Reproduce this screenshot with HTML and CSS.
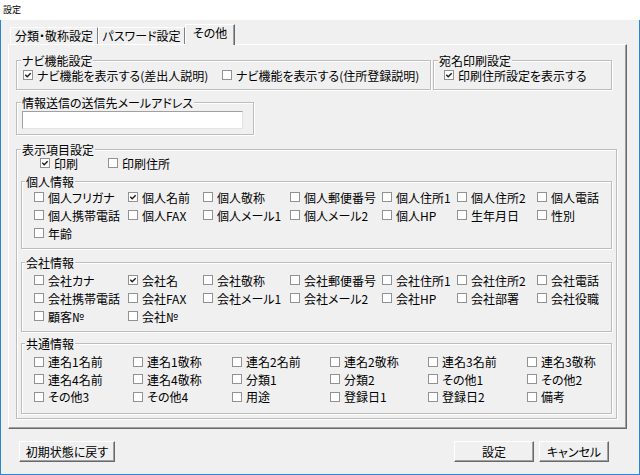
FILE: index.html
```html
<!DOCTYPE html>
<html lang="ja">
<head>
<meta charset="utf-8">
<title>設定</title>
<link rel="stylesheet" href="styles.css">
</head>
<body>
<div class="titlebar">設定</div>
<div class="frame">
  <div class="tabs">
    <div class="tab tab1">分類・敬称設定</div>
    <div class="tab tab2">パスワード設定</div>
    <div class="tab sel">その他</div>
  </div>
  <div class="panel">
    <div class="row1">
      <div class="grp navi">
        <div class="lgd">ナビ機能設定</div>
        <div class="row">
          <label class="cb w199"><span class="box"><svg viewBox="0 0 8 8" width="8" height="8"><path d="M1.3 3.8 L3.2 5.8 L6.7 2.2"/></svg></span>ナビ機能を表示する(差出人説明)</label>
          <label class="cb"><span class="box"></span>ナビ機能を表示する(住所登録説明)</label>
        </div>
      </div>
      <div class="grp atena">
        <div class="lgd">宛名印刷設定</div>
        <div class="row">
          <label class="cb"><span class="box"><svg viewBox="0 0 8 8" width="8" height="8"><path d="M1.3 3.8 L3.2 5.8 L6.7 2.2"/></svg></span>印刷住所設定を表示する</label>
        </div>
      </div>
    </div>
    <div class="grp mail">
      <div class="lgd">情報送信の送信先メールアドレス</div>
      <div class="input"></div>
    </div>
    <div class="grp disp">
      <div class="lgd">表示項目設定</div>
      <div class="toprow">
        <label class="cb w68"><span class="box"><svg viewBox="0 0 8 8" width="8" height="8"><path d="M1.3 3.8 L3.2 5.8 L6.7 2.2"/></svg></span>印刷</label>
        <label class="cb"><span class="box"></span>印刷住所</label>
      </div>
      <div class="grp sub kojin">
        <div class="lgd">個人情報</div>
        <div class="grid g7">
          <label class="cb"><span class="box"></span>個人フリガナ</label>
          <label class="cb"><span class="box"><svg viewBox="0 0 8 8" width="8" height="8"><path d="M1.3 3.8 L3.2 5.8 L6.7 2.2"/></svg></span>個人名前</label>
          <label class="cb"><span class="box"></span>個人敬称</label>
          <label class="cb"><span class="box"></span>個人郵便番号</label>
          <label class="cb"><span class="box"></span>個人住所1</label>
          <label class="cb"><span class="box"></span>個人住所2</label>
          <label class="cb"><span class="box"></span>個人電話</label>
          <label class="cb"><span class="box"></span>個人携帯電話</label>
          <label class="cb"><span class="box"></span>個人FAX</label>
          <label class="cb"><span class="box"></span>個人メール1</label>
          <label class="cb"><span class="box"></span>個人メール2</label>
          <label class="cb"><span class="box"></span>個人HP</label>
          <label class="cb"><span class="box"></span>生年月日</label>
          <label class="cb"><span class="box"></span>性別</label>
          <label class="cb"><span class="box"></span>年齢</label>
        </div>
      </div>
      <div class="grp sub kaisha">
        <div class="lgd">会社情報</div>
        <div class="grid g7">
          <label class="cb"><span class="box"></span>会社カナ</label>
          <label class="cb"><span class="box"><svg viewBox="0 0 8 8" width="8" height="8"><path d="M1.3 3.8 L3.2 5.8 L6.7 2.2"/></svg></span>会社名</label>
          <label class="cb"><span class="box"></span>会社敬称</label>
          <label class="cb"><span class="box"></span>会社郵便番号</label>
          <label class="cb"><span class="box"></span>会社住所1</label>
          <label class="cb"><span class="box"></span>会社住所2</label>
          <label class="cb"><span class="box"></span>会社電話</label>
          <label class="cb"><span class="box"></span>会社携帯電話</label>
          <label class="cb"><span class="box"></span>会社FAX</label>
          <label class="cb"><span class="box"></span>会社メール1</label>
          <label class="cb"><span class="box"></span>会社メール2</label>
          <label class="cb"><span class="box"></span>会社HP</label>
          <label class="cb"><span class="box"></span>会社部署</label>
          <label class="cb"><span class="box"></span>会社役職</label>
          <label class="cb"><span class="box"></span>顧客№</label>
          <label class="cb"><span class="box"></span>会社№</label>
        </div>
      </div>
      <div class="grp sub kyotsu">
        <div class="lgd">共通情報</div>
        <div class="grid g6">
          <label class="cb"><span class="box"></span>連名1名前</label>
          <label class="cb"><span class="box"></span>連名1敬称</label>
          <label class="cb"><span class="box"></span>連名2名前</label>
          <label class="cb"><span class="box"></span>連名2敬称</label>
          <label class="cb"><span class="box"></span>連名3名前</label>
          <label class="cb"><span class="box"></span>連名3敬称</label>
          <label class="cb"><span class="box"></span>連名4名前</label>
          <label class="cb"><span class="box"></span>連名4敬称</label>
          <label class="cb"><span class="box"></span>分類1</label>
          <label class="cb"><span class="box"></span>分類2</label>
          <label class="cb"><span class="box"></span>その他1</label>
          <label class="cb"><span class="box"></span>その他2</label>
          <label class="cb"><span class="box"></span>その他3</label>
          <label class="cb"><span class="box"></span>その他4</label>
          <label class="cb"><span class="box"></span>用途</label>
          <label class="cb"><span class="box"></span>登録日1</label>
          <label class="cb"><span class="box"></span>登録日2</label>
          <label class="cb"><span class="box"></span>備考</label>
        </div>
      </div>
    </div>
  </div>
  <div class="buttons">
    <div class="btn reset">初期状態に戻す</div>
    <div class="btn ok">設定</div>
    <div class="btn cancel">キャンセル</div>
  </div>
</div>
</body>
</html>
```
FILE: styles.css
```css
* { box-sizing: border-box; }
html, body { margin: 0; padding: 0; }
body {
  width: 640px;
  height: 475px;
  overflow: hidden;
  background: #fff;
  font-family: "Noto Sans CJK JP", "Noto Sans", sans-serif;
  font-size: 12px;
  color: #000;
  font-feature-settings: "palt";
}
.titlebar {
  height: 20px;
  background: #fff;
  padding-left: 3px;
  font-size: 9px;
  line-height: 20px;
}
.frame {
  height: 455px;
  background: #f0f0f0;
  border: 1px solid #2b86d9;
  border-top: 0;
  padding-top: 4px;
}
.tabs {
  display: flex;
  align-items: flex-end;
  height: 20px;
  margin-left: 9px;
}
.tab {
  height: 17px;
  line-height: 16px;
  border-top: 1px solid #fff;
  border-left: 1px solid #fff;
  border-right: 1px solid #808080;
  text-align: center;
  white-space: nowrap;
  background: #f0f0f0;
}
.tab1 { width: 88px; }
.tab2 { width: 87px; }
.tab.sel {
  width: 50px;
  height: 21px;
  margin-bottom: -1px;
  position: relative;
  z-index: 1;
  border-right-color: #696969;
  box-shadow: inset -1px 0 #a0a0a0;
}
.panel {
  margin-left: 7px;
  width: 619px;
  height: 385px;
  border: 1px solid;
  border-color: #fff #696969 #696969 #fff;
  box-shadow: inset -1px -1px #a0a0a0;
}
/* etched group box */
.grp {
  padding: 0 4px;
  border: 1px solid #bdbdbd;
  box-shadow: inset 1px 1px #fff, 1px 1px #fff;
}
.lgd {
  width: fit-content;
  margin-top: -7px;
  padding: 0 1px;
  height: 13px;
  line-height: 13px;
  background: #f0f0f0;
  white-space: nowrap;
}
.row1 {
  display: flex;
  align-items: flex-start;
  gap: 2px;
  margin: 15px 0 0 7px;
}
.navi { width: 415px; padding-bottom: 6px; }
.atena { width: 179px; padding-bottom: 6px; }
.row {
  display: flex;
  height: 16px;
  align-items: center;
}
.navi .row { margin-left: 2px; }
.atena .row { margin-left: 6px; }
.cb {
  display: flex;
  align-items: center;
  white-space: nowrap;
  height: 100%;
}
.w199 { width: 199px; }
.w68 { width: 68px; }
.box {
  flex: none;
  width: 10px;
  height: 10px;
  margin-right: 4px;
  background: #fff;
  border: 1px solid #929292;
  display: flex;
  align-items: center;
  justify-content: center;
}
.box svg { display: block; }
.box path {
  fill: none;
  stroke: #1a1a1a;
  stroke-width: 1.4;
}
.mail {
  width: 238px;
  margin: 12px 0 0 7px;
  padding-bottom: 5px;
}
.input {
  width: 221px;
  height: 18px;
  margin: 2px 0 0 1px;
  background: #fff;
  border: 1px solid;
  border-color: #a0a0a0 #e3e3e3 #e3e3e3 #a0a0a0;
}
.disp {
  width: 601px;
  margin: 14px 0 0 7px;
  padding: 0 4px 4px;
}
.toprow {
  display: flex;
  height: 14px;
  margin-left: 19px;
}
.sub { padding: 0 3px 6px; }
.kojin { margin-top: 11px; }
.kaisha { margin-top: 13px; }
.kyotsu { margin-top: 11px; padding-bottom: 7.5px; }
.grid {
  display: grid;
  margin-left: 9px;
  grid-auto-rows: 18px;
}
.g7 { grid-template-columns: 94px 75px 87px 92px 75px 80px 1fr; }
.g6 {
  grid-template-columns: 99px 99px 98px 98px 99px 1fr;
  grid-auto-rows: 17.5px;
  margin-top: 3px;
}
.kaisha .grid { margin-top: 2px; }
.buttons {
  display: flex;
  margin: 12px 0 0 18px;
  padding-right: 30px;
  height: 21px;
}
.btn {
  height: 21px;
  line-height: 19px;
  text-align: center;
  border: 1px solid;
  border-color: #fff #696969 #696969 #fff;
  box-shadow: inset -1px -1px #a0a0a0;
  white-space: nowrap;
}
.reset { width: 96px; }
.ok { width: 80px; margin-left: auto; }
.cancel { width: 70px; margin-left: 5px; }
```
